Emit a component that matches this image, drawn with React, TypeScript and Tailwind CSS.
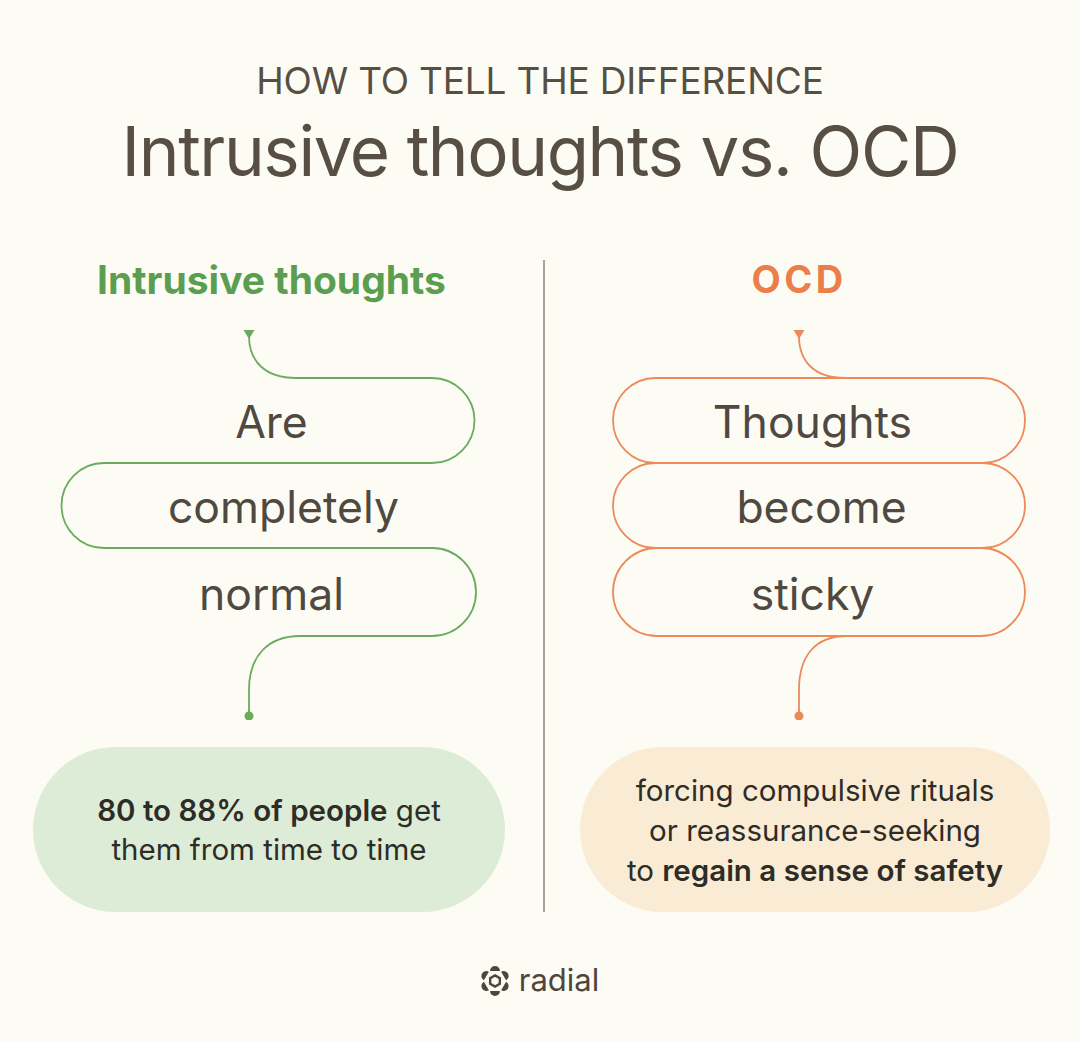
import React from 'react';

const GREEN = '#6aab5e';
const ORANGE = '#ec8a5a';

// left snake: one path winding back and forth, page coordinates
function GreenSnake() {
  return (
    <svg
      className="absolute inset-0"
      width={543}
      height={400}
      viewBox="0 320 543 400"
      fill="none"
    >
      <path
        d="M249 336 C249 362 266 378 296 378 L432 378 A42.5 42.5 0 0 1 432 463 L104 463 A42.5 42.5 0 0 0 104 548 L432 548 A44 44 0 0 1 432 636 L300 636 C268 636 249 656 249 690 L249 716"
        stroke={GREEN}
        strokeWidth={1.8}
      />
      <path d="M243.5 330 L254.5 330 L249 339 Z" fill={GREEN} />
      <circle cx={249} cy={716} r={4.5} fill={GREEN} />
    </svg>
  );
}

// right snake: three stacked pills
function OrangeSnake() {
  return (
    <svg
      className="absolute inset-0"
      width={535}
      height={400}
      viewBox="545 320 535 400"
      fill="none"
    >
      <path
        d="M799 336 C799 362 815 378 845 378"
        stroke={ORANGE}
        strokeWidth={1.8}
      />
      <rect x={613} y={378} width={412} height={85} rx={42.5} stroke={ORANGE} strokeWidth={1.8} />
      <rect x={613} y={463} width={412} height={85} rx={42.5} stroke={ORANGE} strokeWidth={1.8} />
      <rect x={613} y={548} width={412} height={88} rx={44} stroke={ORANGE} strokeWidth={1.8} />
      <path
        d="M847 636 C815 636 799 656 799 690 L799 716"
        stroke={ORANGE}
        strokeWidth={1.8}
      />
      <path d="M793.5 330 L804.5 330 L799 339 Z" fill={ORANGE} />
      <circle cx={799} cy={716} r={4.5} fill={ORANGE} />
    </svg>
  );
}

function RadialLogo() {
  const petals = [0, 60, 120, 180, 240, 300];
  return (
    <svg width={28} height={32} viewBox="-14 -16 28 32">
      {petals.map((a) => (
        <path
          key={a}
          d="M-4.6 -9.2 A4.6 4.6 0 1 1 4.6 -9.2 Z"
          transform={`rotate(${a}) scale(1.08)`}
          fill="#4f463b"
        />
      ))}
      <polygon
        points="0,-5.6 4.85,-2.8 4.85,2.8 0,5.6 -4.85,2.8 -4.85,-2.8"
        fill="none"
        stroke="#4f463b"
        strokeWidth={2.4}
      />
    </svg>
  );
}

export default function App() {
  return (
    <div className="w-[1080px] h-[1041px] bg-[#fdfcf4] flex flex-col items-center font-['Inter','Liberation_Sans',sans-serif] text-[#574f44]">
      {/* header */}
      <p className="mt-[62px] text-[37px] leading-none tracking-[-0.005em] uppercase">
        How to tell the difference
      </p>
      <h1 className="mt-[18px] text-[69px] leading-none tracking-[-0.02em]">
        Intrusive thoughts vs. OCD
      </h1>

      {/* two columns */}
      <div className="mt-[74px] w-full grid grid-cols-[543px_2px_535px]">
        {/* intrusive thoughts */}
        <div className="flex flex-col">
          <h2 className="h-[38px] text-center text-[39px] leading-none font-bold text-[#5b9e50]">
            Intrusive thoughts
          </h2>
          <div className="relative mt-[22px] h-[400px]">
            <GreenSnake />
            <div className="relative flex flex-col pt-[58px] text-[44.5px] leading-none text-[#4f4941]">
              <div className="h-[85px] flex items-center justify-center pt-[4px]">Are</div>
              <div className="h-[85px] flex items-center justify-center pt-[4px] pl-[24px]">completely</div>
              <div className="h-[88px] flex items-center justify-center pt-[4px]">normal</div>
            </div>
          </div>
          <div className="mt-[27px] ml-[33px] w-[472px] h-[165px] rounded-full bg-[#ddecd6] flex items-center justify-center text-center text-[29.5px] leading-[39px] text-[#2e2c27]">
            <p>
              <span className="font-semibold">80 to 88% of people</span> get
              <br />
              them from time to time
            </p>
          </div>
        </div>

        {/* divider */}
        <div className="bg-[#a7a298]" />

        {/* ocd */}
        <div className="flex flex-col">
          <h2 className="h-[38px] text-center pr-[27px] text-[38px] leading-none font-bold text-[#ea7f4c] tracking-[0.09em]">
            OCD
          </h2>
          <div className="relative mt-[22px] h-[400px]">
            <OrangeSnake />
            <div className="relative flex flex-col pt-[58px] text-[44.5px] leading-none text-[#4f4941]">
              <div className="h-[85px] flex items-center justify-center pt-[4px]">Thoughts</div>
              <div className="h-[85px] flex items-center justify-center pt-[4px] pl-[18px]">become</div>
              <div className="h-[88px] flex items-center justify-center pt-[4px]">sticky</div>
            </div>
          </div>
          <div className="mt-[27px] ml-[35px] w-[470px] h-[165px] rounded-full bg-[#f9ebd4] flex items-center justify-center text-center text-[29.5px] leading-[40px] text-[#2e2c27]">
            <p>
              forcing compulsive rituals
              <br />
              or reassurance-seeking
              <br />
              to <span className="font-semibold">regain a sense of safety</span>
            </p>
          </div>
        </div>
      </div>

      {/* footer logo */}
      <div className="mt-[52px] flex items-center gap-[10px]">
        <RadialLogo />
        <span className="text-[31px] leading-none text-[#4f463b] pb-[2px]">radial</span>
      </div>
    </div>
  );
}
